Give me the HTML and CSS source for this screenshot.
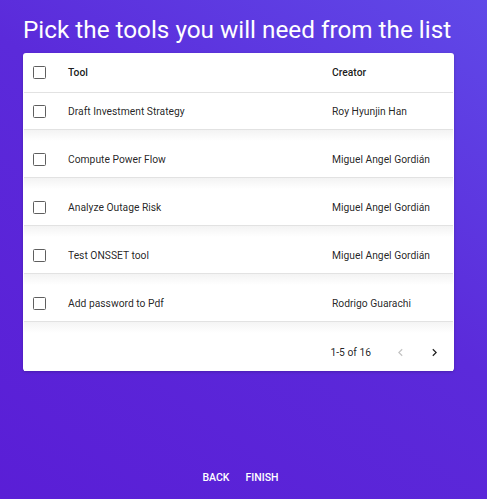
FILE: index.html
```html
<!DOCTYPE html>
<html lang="en">
<head>
    <meta charset="UTF-8">
    <meta name="viewport" content="width=device-width, initial-scale=1.0">
    <title>Pick Tools</title>
    <link rel="stylesheet" href="styles.css">
</head>
<body>
    <div class="page">
        <h1 class="title">Pick the tools you will need from the list</h1>

        <div class="card">
            <div class="row head">
                <div class="cell check"><span class="box"></span></div>
                <div class="cell">Tool</div>
                <div class="cell">Creator</div>
            </div>

            <div class="row first">
                <div class="cell check"><span class="box"></span></div>
                <div class="cell">Draft Investment Strategy</div>
                <div class="cell">Roy Hyunjin Han</div>
            </div>
            <div class="row">
                <div class="cell check"><span class="box"></span></div>
                <div class="cell">Compute Power Flow</div>
                <div class="cell">Miguel Angel Gordián</div>
            </div>
            <div class="row">
                <div class="cell check"><span class="box"></span></div>
                <div class="cell">Analyze Outage Risk</div>
                <div class="cell">Miguel Angel Gordián</div>
            </div>
            <div class="row">
                <div class="cell check"><span class="box"></span></div>
                <div class="cell">Test ONSSET tool</div>
                <div class="cell">Miguel Angel Gordián</div>
            </div>
            <div class="row">
                <div class="cell check"><span class="box"></span></div>
                <div class="cell">Add password to Pdf</div>
                <div class="cell">Rodrigo Guarachi</div>
            </div>

            <div class="pager">
                <span class="count">1-5 of 16</span>
                <button class="nav disabled" aria-label="Previous page">
                    <svg width="15" height="15" viewBox="0 0 24 24"><path d="M15.41 7.41L14 6l-6 6 6 6 1.41-1.41L10.83 12z" fill="currentColor"/></svg>
                </button>
                <button class="nav" aria-label="Next page">
                    <svg width="15" height="15" viewBox="0 0 24 24"><path d="M10 6L8.59 7.41 13.17 12l-4.58 4.59L10 18l6-6z" fill="currentColor"/></svg>
                </button>
            </div>
        </div>

        <div class="actions">
            <button class="text-btn">Back</button>
            <button class="text-btn">Finish</button>
        </div>
    </div>
</body>
</html>
```

FILE: styles.css
```css
* {
    margin: 0;
    padding: 0;
    box-sizing: border-box;
}

body {
    font-family: Roboto, 'Liberation Sans', sans-serif;
    background: linear-gradient(35deg, #5a1ed6 0%, #5b2ada 55%, #6049e8 100%);
    height: 100vh;
    overflow: hidden;
}

.page {
    height: 100vh;
    padding: 14px 33px 11px 23px;
    display: flex;
    flex-direction: column;
}

.title {
    color: #fff;
    font-size: 24.3px;
    font-weight: 400;
    line-height: 32px;
    margin-bottom: 7px;
    white-space: nowrap;
}

.card {
    background: #fff;
    border-radius: 3px;
    box-shadow: 0 1px 3px rgba(0, 0, 0, 0.2);
    width: 431px;
}

.row {
    display: grid;
    grid-template-columns: 44px 264px 1fr;
    align-items: center;
    height: 48px;
    padding-top: 11px;
    margin: 0 1px;
    border-bottom: 1px solid #e2e2e2;
    background: linear-gradient(#f3f3f3, #fff 11px);
    font-size: 10.3px;
    color: rgba(0, 0, 0, 0.87);
}

.row.head {
    height: 40px;
    padding-top: 0;
    background: none;
    font-weight: 500;
    color: rgba(0, 0, 0, 0.9);
}

.row.first {
    height: 37px;
    padding-top: 0;
    background: none;
}

.check {
    padding-left: 9px;
    display: flex;
    align-items: center;
}

.box {
    width: 13px;
    height: 13px;
    border: 1.7px solid #5f5f5f;
    border-radius: 1.5px;
}

.pager {
    height: 49px;
    padding-top: 12px;
    margin: 0 1px;
    background: linear-gradient(#f4f4f4, #fff 11px);
    display: flex;
    align-items: center;
    justify-content: flex-end;
    font-size: 10.3px;
    color: rgba(0, 0, 0, 0.87);
}

.count {
    margin-right: 12px;
}

.nav {
    background: none;
    border: none;
    width: 34px;
    height: 24px;
    display: flex;
    align-items: center;
    justify-content: center;
    color: #222;
}

.nav:last-child {
    margin-right: 2px;
}

.nav.disabled {
    color: #c4c4c4;
}

.actions {
    margin-top: auto;
    display: flex;
    justify-content: center;
    gap: 16px;
    padding-left: 4px;
}

.text-btn {
    background: none;
    border: none;
    color: #fff;
    font-family: Roboto, sans-serif;
    font-size: 10.5px;
    font-weight: 500;
    text-transform: uppercase;
    padding: 4px 0;
}
```
